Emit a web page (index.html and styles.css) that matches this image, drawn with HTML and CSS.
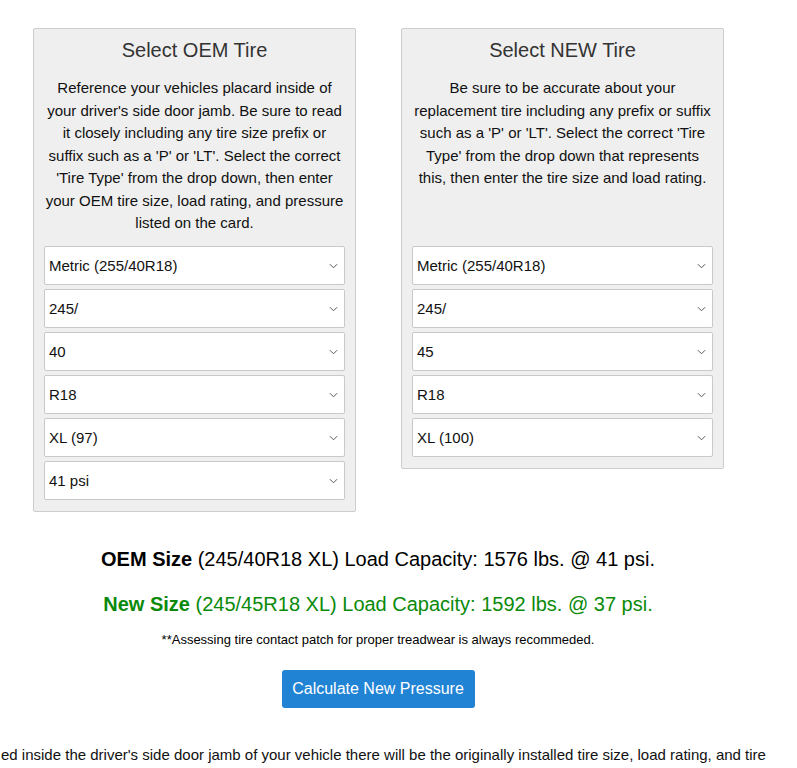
FILE: index.html
```html
<!DOCTYPE html>
<html>
<head>
<meta charset="utf-8">
<link rel="stylesheet" href="styles.css">
</head>
<body>
<div class="container">
  <div class="panels">
    <div class="panel">
      <h2 class="panel-title">Select OEM Tire</h2>
      <p class="panel-text">Reference your vehicles placard inside of your driver's side door jamb. Be sure to read it closely including any tire size prefix or suffix such as a 'P' or 'LT'. Select the correct 'Tire Type' from the drop down, then enter your OEM tire size, load rating, and pressure listed on the card.</p>
      <div class="fields">
        <select class="field"><option>Metric (255/40R18)</option></select>
        <select class="field"><option>245/</option></select>
        <select class="field"><option>40</option></select>
        <select class="field"><option>R18</option></select>
        <select class="field"><option>XL (97)</option></select>
        <select class="field"><option>41 psi</option></select>
      </div>
    </div>
    <div class="panel">
      <h2 class="panel-title">Select NEW Tire</h2>
      <p class="panel-text">Be sure to be accurate about your replacement tire including any prefix or suffix such as a 'P' or 'LT'. Select the correct 'Tire Type' from the drop down that represents this, then enter the tire size and load rating.</p>
      <div class="fields">
        <select class="field"><option>Metric (255/40R18)</option></select>
        <select class="field"><option>245/</option></select>
        <select class="field"><option>45</option></select>
        <select class="field"><option>R18</option></select>
        <select class="field"><option>XL (100)</option></select>
      </div>
    </div>
  </div>
  <div class="results">
    <p class="result"><b>OEM Size</b> (245/40R18 XL) Load Capacity: 1576 lbs. @ 41 psi.</p>
    <p class="result result-new"><b>New Size</b> (245/45R18 XL) Load Capacity: 1592 lbs. @ 37 psi.</p>
    <p class="note">**Assessing tire contact patch for proper treadwear is always recommeded.</p>
    <button class="calc">Calculate New Pressure</button>
  </div>
</div>
<p class="info">ed inside the driver's side door jamb of your vehicle there will be the originally installed tire size, load rating, and tire</p>
</body>
</html>
```

FILE: styles.css
```css
html, body {
  margin: 0;
  padding: 0;
  background: #fff;
  font-family: "Liberation Sans", Arial, sans-serif;
  color: #111;
}

.container {
  width: 690px;
  margin-left: 33px;
  padding-top: 28px;
}

.panels {
  display: flex;
  gap: 45px;
  align-items: flex-start;
}

.panel {
  width: 301px;
  background: #efefef;
  border: 1px solid #cdcdcd;
  border-radius: 2px;
  padding: 0 10px 11px 10px;
}

.panel-title {
  margin: 8px 0 0 0;
  font-size: 20px;
  font-weight: normal;
  line-height: 26px;
  color: #333;
  text-align: center;
}

.panel-text {
  margin: 14px 0 11px 0;
  font-size: 15px;
  line-height: 22.5px;
  text-align: center;
  color: #111;
  height: 158px;
}

.fields {
  display: flex;
  flex-direction: column;
  gap: 4px;
  margin-top: 0;
}

.field {
  -webkit-appearance: none;
  appearance: none;
  display: block;
  width: 301px;
  height: 39px;
  margin: 0;
  padding: 0 24px 0 4px;
  border: 1px solid #c9c9c9;
  border-radius: 2px;
  background-color: #fff;
  background-image: url("data:image/svg+xml,%3Csvg xmlns='http://www.w3.org/2000/svg' width='10' height='6' viewBox='0 0 10 6'%3E%3Cpath d='M1 1l4 4 4-4' fill='none' stroke='%23555' stroke-width='1.1'/%3E%3C/svg%3E");
  background-repeat: no-repeat;
  background-position: right 6px center;
  background-size: 9px 6px;
  font-family: "Liberation Sans", Arial, sans-serif;
  font-size: 15px;
  color: #111;
}

.results {
  display: flex;
  flex-direction: column;
  align-items: center;
  padding-top: 36px;
}

.result {
  margin: 0;
  font-size: 20px;
  line-height: 23px;
  color: #000;
}

.result-new {
  margin-top: 22px;
  color: #0a8a0a;
}

.note {
  margin: 16px 0 0 0;
  font-size: 13px;
  line-height: 15px;
  color: #000;
}

.calc {
  margin-top: 23px;
  width: 193px;
  height: 38px;
  border: none;
  border-radius: 3px;
  background: #2183d4;
  color: #fff;
  font-family: "Liberation Sans", Arial, sans-serif;
  font-size: 16px;
  cursor: pointer;
}

.info {
  margin: 38px 0 0 0;
  padding-left: 1px;
  font-size: 15px;
  line-height: 18px;
  white-space: nowrap;
  color: #111;
}
```
